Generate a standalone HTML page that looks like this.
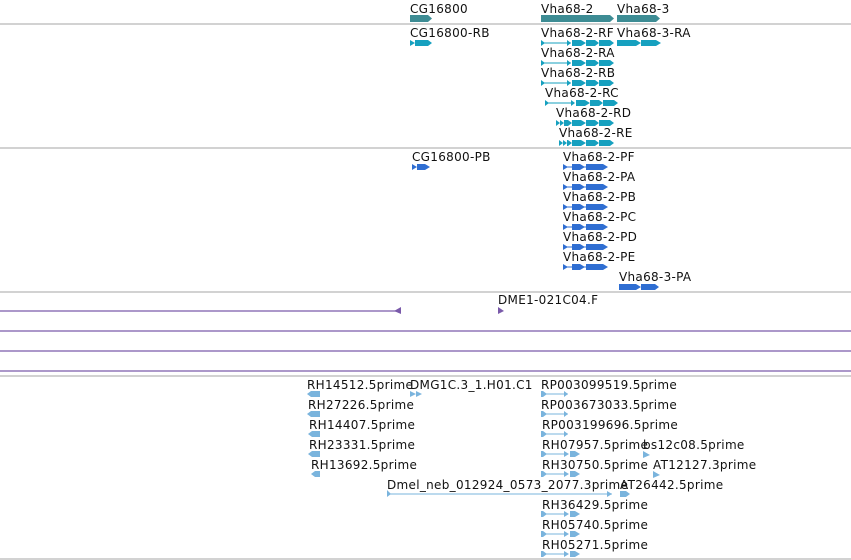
<!DOCTYPE html>
<html><head><meta charset="utf-8"><style>
html,body{margin:0;padding:0;background:#fff;width:851px;height:560px;overflow:hidden}
svg{display:block}
text{font-family:"DejaVu Sans","Liberation Sans",sans-serif;font-size:12px;fill:#111;letter-spacing:0.3px}
</style></head><body>
<svg width="851" height="560" viewBox="0 0 851 560" xmlns="http://www.w3.org/2000/svg">
<g stroke="#c4c4c4" stroke-width="1.5">
<line x1="0" y1="24" x2="851" y2="24"/>
<line x1="0" y1="148" x2="851" y2="148"/>
<line x1="0" y1="292" x2="851" y2="292"/>
<line x1="0" y1="376" x2="851" y2="376"/>
<line x1="0" y1="559" x2="851" y2="559"/>
</g>
<g stroke="#7a5aaa" stroke-width="1.3">
<line x1="0" y1="331" x2="851" y2="331"/>
<line x1="0" y1="351" x2="851" y2="351"/>
<line x1="0" y1="371" x2="851" y2="371"/>
<line x1="0" y1="311" x2="398" y2="311"/>
</g>
<g fill="#7a5aaa">
<path d="M394 311 L401 307 V314 Z"/>
<path d="M498 307 L504 311 L498 314 Z"/>
</g>
<text x="498" y="304">DME1-021C04.F</text>

<g fill="#3d8c94">
<path d="M410 15H428L432 18.5L428 22H410Z"/>
<path d="M541 15H610L614 18.5L610 22H541Z"/>
<path d="M617 15H656L660 18.5L656 22H617Z"/>
</g>
<text x="410" y="13">CG16800</text>
<text x="541" y="13">Vha68-2</text>
<text x="617" y="13">Vha68-3</text>

<g fill="#16a0bf" stroke="#16a0bf">
<g stroke-width="1">
<line x1="541" y1="43" x2="571" y2="43"/><line x1="541" y1="63" x2="571" y2="63"/><line x1="541" y1="83" x2="571" y2="83"/><line x1="545" y1="103" x2="571" y2="103"/>
</g>
<g stroke="none">
<path d="M410 40L415 43L410 46Z M415 40H428L432 43L428 46H415Z"/>
<path d="M617 40H636L641 43L636 46H617Z M641 40H656L661 43L656 46H641Z"/>
</g>
</g>
<g fill="#16a0bf">
<path id="t1" d="M541 40L545 43L541 46Z M567 40L571 43L567 46Z M572 40H581L586 43L581 46H572Z M586 40H595L599 43L595 46H586Z M599 40H610L614 43L610 46H599Z"/>
<use href="#t1" y="20"/><use href="#t1" y="40"/>
<use href="#t1" x="4" y="60"/>
<path d="M556 120L560 123L556 126Z M560 120L564 123L560 126Z M564 120H568L572 123L568 126H564Z M572 120H581L586 123L581 126H572Z M586 120H595L599 123L595 126H586Z M599 120H610L614 123L610 126H599Z"/>
<path d="M559 140L563 143L559 146Z M563 140L567 143L563 146Z M567 140H568L572 143L568 146H567Z M572 140H581L586 143L581 146H572Z M586 140H595L599 143L595 146H586Z M599 140H610L614 143L610 146H599Z"/>
</g>
<text x="410" y="37">CG16800-RB</text>
<text x="541" y="37">Vha68-2-RF</text>
<text x="617" y="37">Vha68-3-RA</text>
<text x="541" y="57">Vha68-2-RA</text>
<text x="541" y="77">Vha68-2-RB</text>
<text x="545" y="97">Vha68-2-RC</text>
<text x="556" y="117">Vha68-2-RD</text>
<text x="559" y="137">Vha68-2-RE</text>

<g fill="#2f6ed2">
<path d="M412 164L417 167L412 170Z M417 164H425L430 167L425 170H417Z"/>
<g id="p1"><line x1="563" y1="167" x2="586" y2="167" stroke="#2f6ed2" stroke-width="1"/><path d="M563 164L568 167L563 170Z M572 164H580L585 167L580 170H572Z M586 164H603L608 167L603 170H586Z"/></g>
<use href="#p1" y="20"/><use href="#p1" y="40"/><use href="#p1" y="60"/><use href="#p1" y="80"/><use href="#p1" y="100"/>
<path d="M619 284H636L641 287L636 290H619Z M641 284H655L659 287L655 290H641Z"/>
</g>
<text x="412" y="161">CG16800-PB</text>
<text x="563" y="161">Vha68-2-PF</text>
<text x="563" y="181">Vha68-2-PA</text>
<text x="563" y="201">Vha68-2-PB</text>
<text x="563" y="221">Vha68-2-PC</text>
<text x="563" y="241">Vha68-2-PD</text>
<text x="563" y="261">Vha68-2-PE</text>
<text x="619" y="281">Vha68-3-PA</text>

<g fill="#7ab4dd" stroke="none">
<path d="M307 394L311 391H320V397H311Z"/>
<path d="M307 414L311 411H320V417H311Z"/>
<path d="M308 434L312 431H320V437H312Z"/>
<path d="M308 454L312 451H320V457H312Z"/>
<path d="M311 474L315 471H320V477H315Z"/>
<path d="M410 391L416 394L410 397Z M416 391L422 394L416 397Z"/>
<g id="e1"><line x1="541" y1="394" x2="568" y2="394" stroke="#7ab4dd" stroke-width="1"/><path d="M541 391H543L547 394L543 397H541Z M564 391L568 394L564 397Z"/></g>
<use href="#e1" y="20"/><use href="#e1" y="40"/>
<g id="e2"><line x1="541" y1="454" x2="568" y2="454" stroke="#7ab4dd" stroke-width="1"/><path d="M541 451H543L547 454L543 457H541Z M564 451L569 454L564 457Z M570 451H575L580 454L575 457H570Z"/></g>
<use href="#e2" y="20"/><use href="#e2" y="60"/><use href="#e2" y="80"/><use href="#e2" y="100"/>
<path d="M643 451L650 455L643 458Z"/>
<path d="M653 471L660 475L653 478Z"/>
<line x1="387" y1="494" x2="612" y2="494" stroke="#7ab4dd" stroke-width="1"/>
<path d="M387 490V497L391 494Z M607 491L612 494L607 497Z M620 491H626L630 494L626 497H620Z"/>
</g>
<text x="307" y="389">RH14512.5prime</text>
<text x="410" y="389">DMG1C.3_1.H01.C1</text>
<text x="541" y="389">RP003099519.5prime</text>
<text x="308" y="409">RH27226.5prime</text>
<text x="541" y="409">RP003673033.5prime</text>
<text x="309" y="429">RH14407.5prime</text>
<text x="542" y="429">RP003199696.5prime</text>
<text x="309" y="449">RH23331.5prime</text>
<text x="542" y="449">RH07957.5prime</text>
<text x="643" y="449">bs12c08.5prime</text>
<text x="311" y="469">RH13692.5prime</text>
<text x="542" y="469">RH30750.5prime</text>
<text x="653" y="469">AT12127.3prime</text>
<text x="387" y="489">Dmel_neb_012924_0573_2077.3prime</text>
<text x="620" y="489">AT26442.5prime</text>
<text x="542" y="509">RH36429.5prime</text>
<text x="542" y="529">RH05740.5prime</text>
<text x="542" y="549">RH05271.5prime</text>
</svg>
</body></html>
